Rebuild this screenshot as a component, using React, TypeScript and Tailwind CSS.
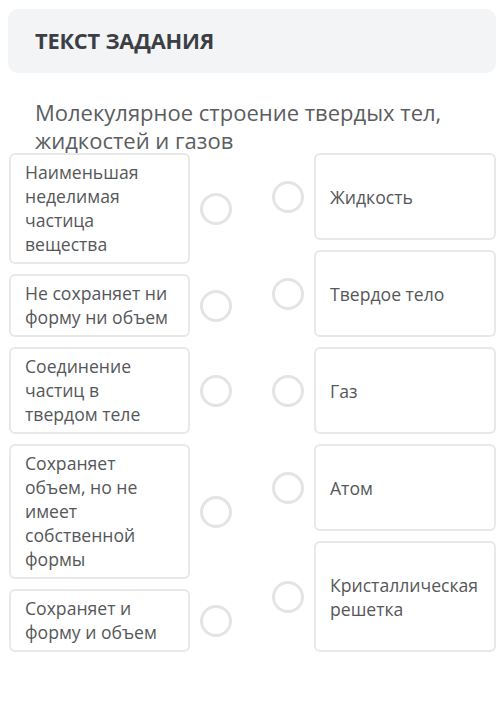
import React from "react";

const left = [
  "Наименьшая неделимая частица вещества",
  "Не сохраняет ни форму ни объем",
  "Соединение частиц в твердом теле",
  "Сохраняет объем, но не имеет собственной формы",
  "Сохраняет и форму и объем",
];
const right = ["Жидкость", "Твердое тело", "Газ", "Атом", "Кристаллическая решетка"];

function Circle() {
  return <div className="w-[32px] h-[32px] shrink-0 rounded-full border-[3px] border-[#e4e4e4] bg-white" />;
}

export default function App() {
  return (
    <div className="w-[500px] h-[707px] bg-white" style={{ fontFamily: '"Open Sans", "Liberation Sans", sans-serif' }}>
      <div className="pt-[9px] pl-[8px] pr-[4px]">
        <div className="h-[64px] rounded-[10px] bg-[#f3f4f6] flex items-center px-[27px]">
          <span className="text-[21.8px] font-bold text-[#3b3f44] tracking-[-0.2px]">ТЕКСТ ЗАДАНИЯ</span>
        </div>
        <div className="pl-[27px] pt-[25px] text-[22px] leading-[28px] text-[#5b5d60]">
          Молекулярное строение твердых тел, жидкостей и газов
        </div>
        <div className="-mt-[1px] flex pl-[1px] gap-[40px]">
          <div className="w-[223px] flex flex-col gap-[10px]">
            {left.map((t, i) => (
              <div key={i} className="flex items-center gap-[10px]">
                <div className="w-[181px] rounded-[6px] border-2 border-[#e8e8e8] px-[14px] pt-[5px] pb-[6px] text-[17.6px] leading-[24px] text-[#555759]">
                  {t}
                </div>
                <Circle />
              </div>
            ))}
          </div>
          <div className="w-[224px] flex flex-col gap-[10px]">
            {right.map((t, i) => (
              <div key={i} className={"flex items-center gap-[10px] " + (i === right.length - 1 ? "flex-1" : "")}>
                <Circle />
                <div className="w-[182px] self-stretch min-h-[87px] rounded-[6px] border-2 border-[#e8e8e8] px-[14px] py-[6px] text-[17.6px] leading-[24px] text-[#555759] flex items-center">
                  <span>{t}</span>
                </div>
              </div>
            ))}
          </div>
        </div>
      </div>
    </div>
  );
}
